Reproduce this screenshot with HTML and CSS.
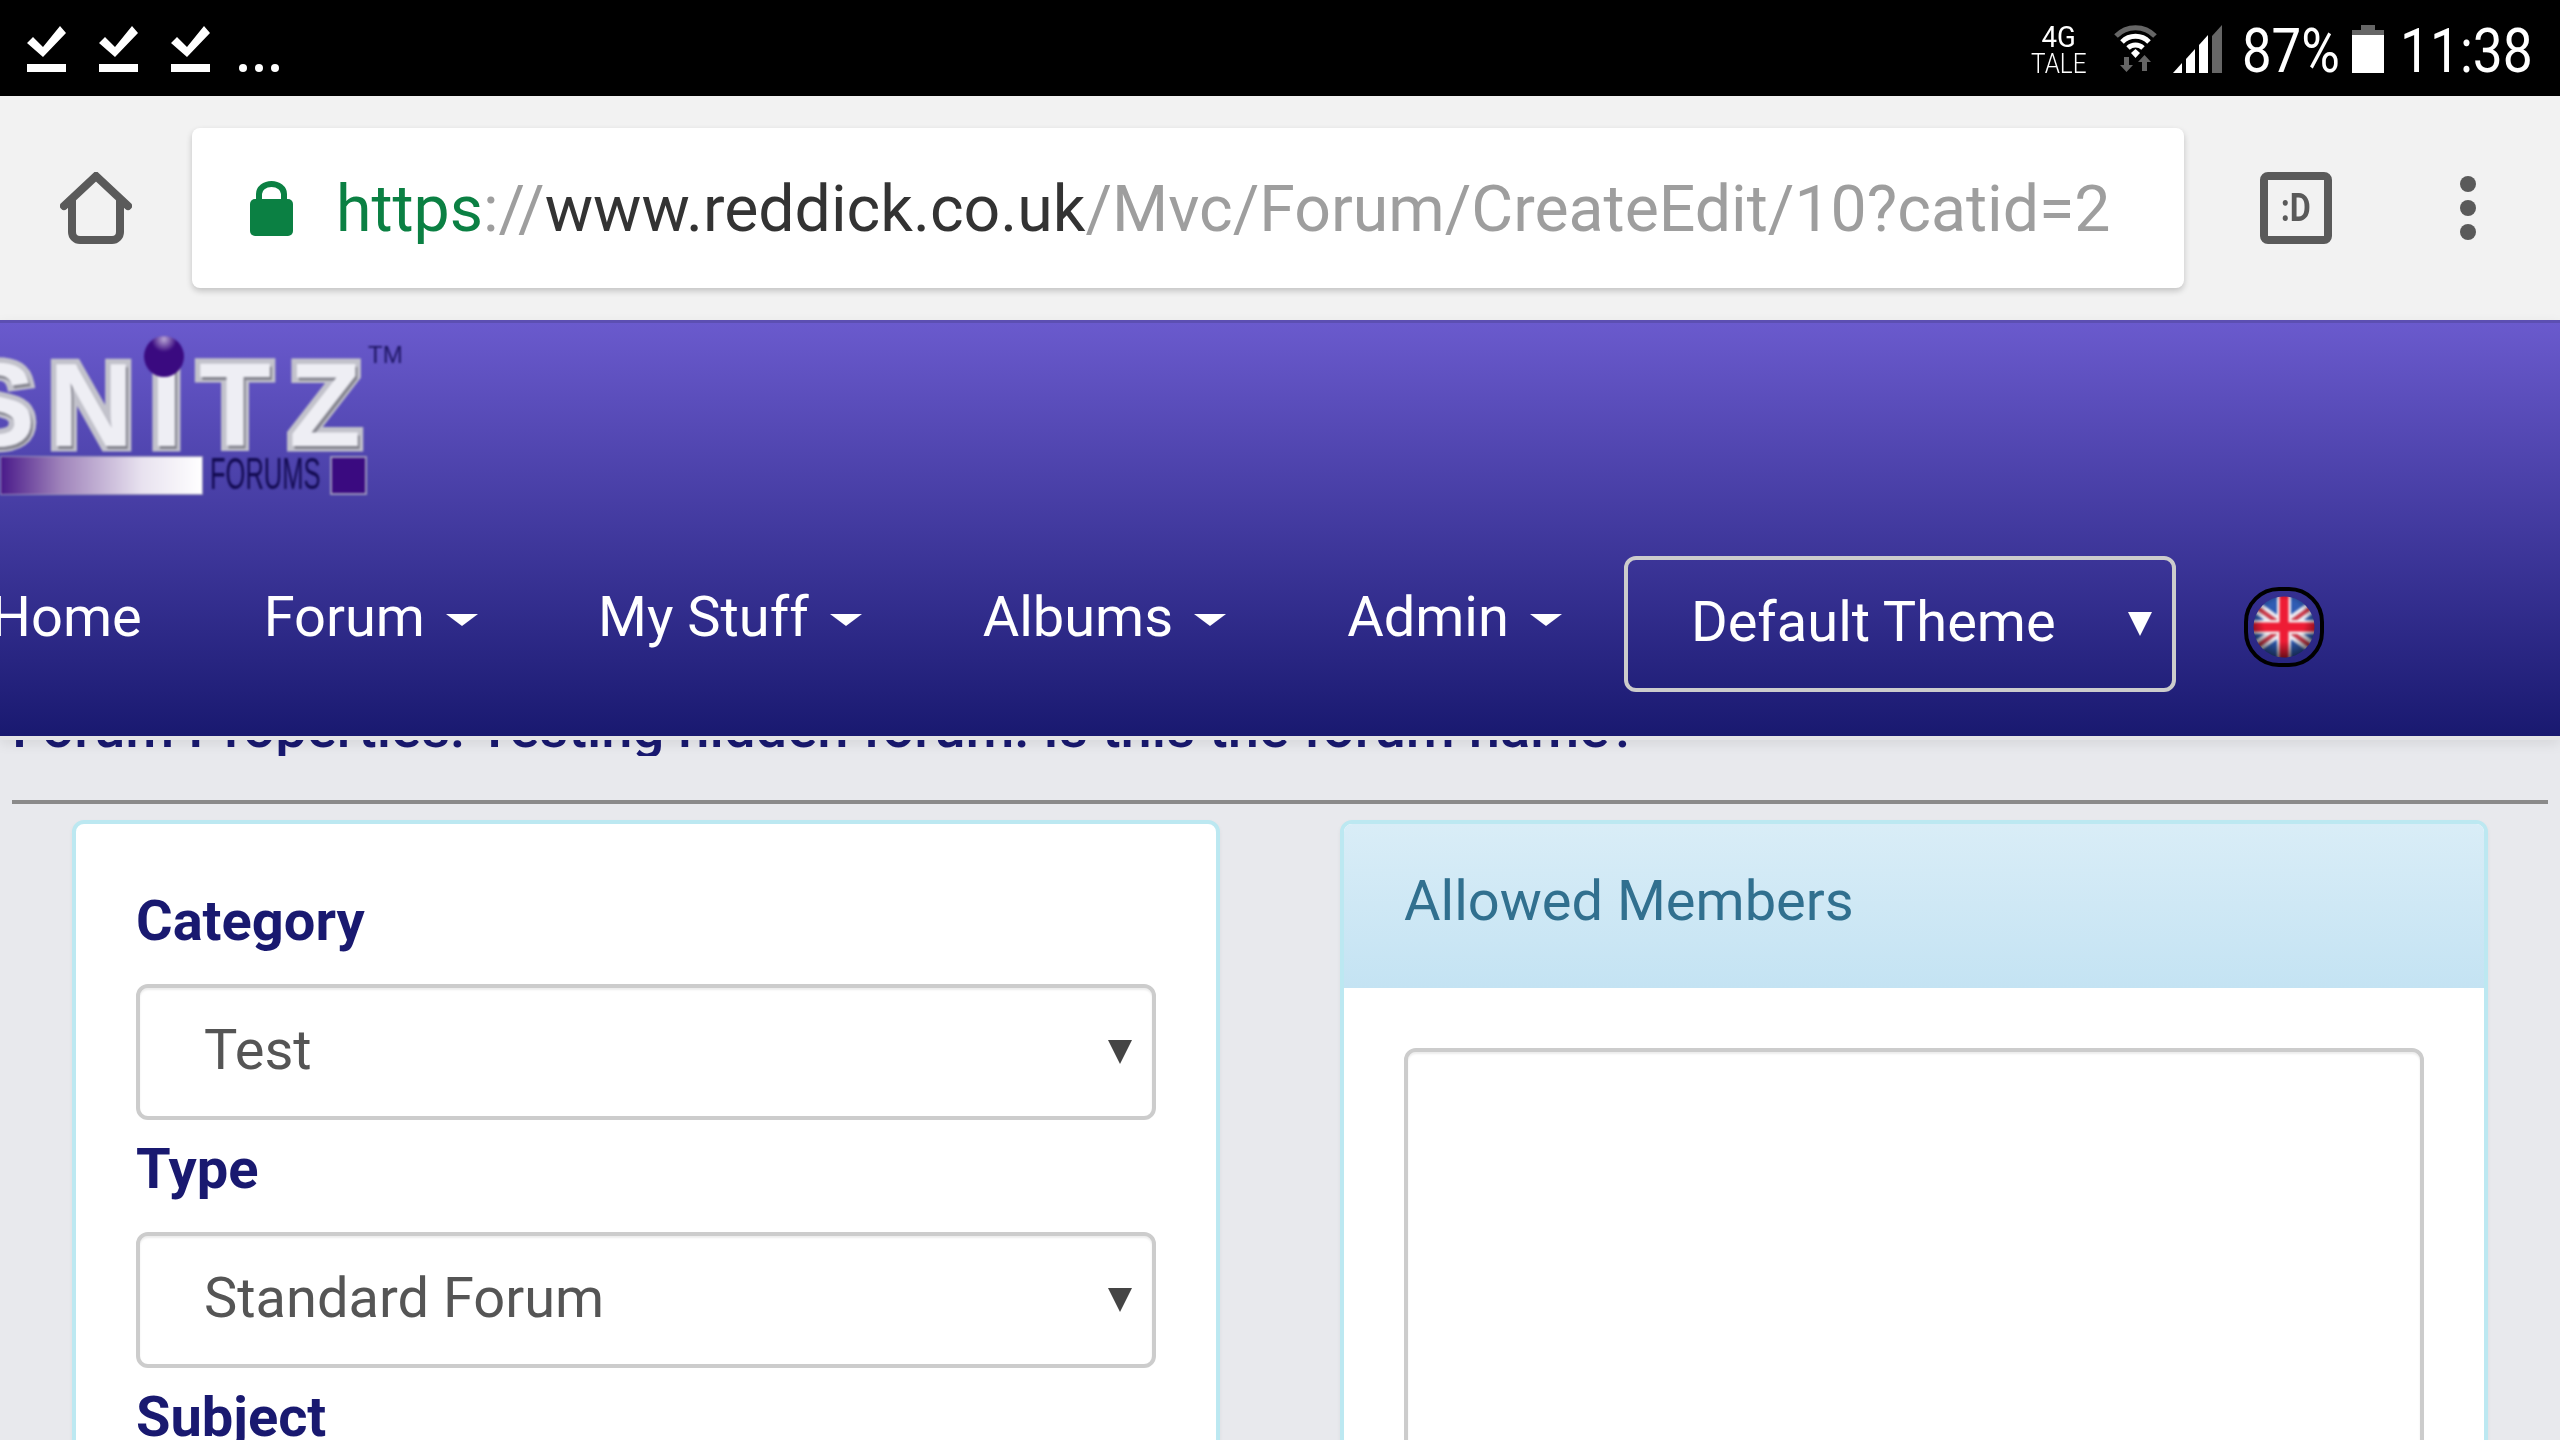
FILE: index.html
```html
<!DOCTYPE html>
<html lang="en">
<head>
  <meta charset="UTF-8">
  <title>Forum Properties</title>
  <link rel="stylesheet" href="styles.css">
</head>
<body>

  <div class="statusbar">
    <div class="status-left">
      <svg class="check" viewBox="0 0 39 46"><polygon points="0,17 6,11 16,21 33,0 39,7 16,31" fill="#fff"/><rect y="38" width="39" height="8" fill="#fff"/></svg>
      <svg class="check" viewBox="0 0 39 46"><polygon points="0,17 6,11 16,21 33,0 39,7 16,31" fill="#fff"/><rect y="38" width="39" height="8" fill="#fff"/></svg>
      <svg class="check" viewBox="0 0 39 46"><polygon points="0,17 6,11 16,21 33,0 39,7 16,31" fill="#fff"/><rect y="38" width="39" height="8" fill="#fff"/></svg>
      <div class="more-dots"><i></i><i></i><i></i></div>
    </div>
    <div class="status-right">
      <div class="net"><span class="net-4g">4G</span><span class="net-tale">TALE</span></div>
      <svg class="wifi" viewBox="0 0 43 48">
        <path d="M2 12 A27 27 0 0 1 41 12" fill="none" stroke="#666" stroke-width="5"/>
        <path d="M8 18 A19 19 0 0 1 35 18" fill="none" stroke="#fff" stroke-width="5"/>
        <path d="M14 24 A11 11 0 0 1 29 24" fill="none" stroke="#fff" stroke-width="5"/>
        <polygon points="17,29 21.500,25 26,29 21.500,34" fill="#fff"/>
        <polygon points="10,33 15,33 15,41 19,41 12.500,48 6,41 10,41" fill="#666"/>
        <polygon points="28,47 33,47 33,38 37,38 30.500,31 24,38 28,38" fill="#666"/>
      </svg>
      <svg class="signal" viewBox="0 0 49 48">
        <polygon points="0,48 9,48 9,38" fill="#fff"/>
        <polygon points="13,48 22,48 22,24 13,34" fill="#fff"/>
        <polygon points="26,48 35,48 35,10 26,20" fill="#fff"/>
        <polygon points="39,48 49,48 49,0 39,11" fill="#666"/>
      </svg>
      <span class="pct">87%</span>
      <div class="battery"><i class="batt-cap"></i><i class="batt-top"></i><i class="batt-fill"></i></div>
      <span class="clock">11:38</span>
    </div>
  </div>

  <div class="toolbar">
    <svg class="home-icon" viewBox="0 0 72 72">
      <path d="M4 34 L36 4 L68 34" fill="none" stroke="#5a5a5a" stroke-width="8" stroke-linecap="round" stroke-linejoin="miter"/>
      <path d="M12 28 V60 a8 8 0 0 0 8 8 H52 a8 8 0 0 0 8 -8 V28" fill="none" stroke="#5a5a5a" stroke-width="8"/>
    </svg>
    <div class="urlbar">
      <svg class="lock" viewBox="0 0 43 55">
        <path d="M9 20 V13 a12.500 10 0 0 1 25 0 V20" fill="none" stroke="#0b8043" stroke-width="6"/>
        <rect y="18" width="43" height="37" rx="5" fill="#0b8043"/>
      </svg>
      <div class="url"><span class="scheme">https</span><span class="faded">://</span><span class="host">www.reddick.co.uk</span><span class="faded">/Mvc/Forum/CreateEdit/10?catid=2</span></div>
    </div>
    <div class="tab-count"><span>:D</span></div>
    <div class="menu-dots"><i></i><i></i><i></i></div>
  </div>

  <div class="site-header">
    <div class="logo">
      <div class="logo-word">
        <span class="l-s">S</span><span class="l-n">N</span><span class="l-i">I</span><span class="l-t">T</span><span class="l-z">Z</span>
        <i class="logo-ball"></i>
        <span class="logo-tm">TM</span>
      </div>
      <div class="logo-sub">
        <i class="logo-bar"></i>
        <div class="logo-forums"><span>FORUMS</span></div>
        <i class="logo-square"></i>
      </div>
    </div>
    <div class="nav">
      <a class="nav-item nav-home">Home</a>
      <a class="nav-item nav-forum">Forum<i class="caret"></i></a>
      <a class="nav-item">My Stuff<i class="caret"></i></a>
      <a class="nav-item">Albums<i class="caret"></i></a>
      <a class="nav-item nav-last">Admin<i class="caret"></i></a>
      <div class="theme-select"><span>Default Theme</span><i class="sel-arrow"></i></div>
      <svg class="flag" viewBox="0 0 80 80">
        <defs>
          <clipPath id="flagclip"><circle cx="40" cy="40" r="30.500"/></clipPath>
          <radialGradient id="flagshade" cx="50%" cy="42%" r="52%">
            <stop offset="50%" stop-color="#000" stop-opacity="0"/>
            <stop offset="100%" stop-color="#000" stop-opacity=".7"/>
          </radialGradient>
        </defs>
        <rect x="2" y="2" width="76" height="76" rx="33" fill="none" stroke="#000" stroke-width="4"/>
        <g class="flag-art" clip-path="url(#flagclip)">
          <rect width="80" height="80" fill="#2f5cb4"/>
          <path d="M4 14 L76 66 M76 14 L4 66" stroke="#e8e8f0" stroke-width="12"/>
          <path d="M4 14 L76 66 M76 14 L4 66" stroke="#cc3a4a" stroke-width="4"/>
          <path d="M40 0 V80 M0 40 H80" stroke="#f4eef0" stroke-width="14"/>
          <path d="M40 0 V80 M0 40 H80" stroke="#ee1c35" stroke-width="9"/>
          <rect width="80" height="80" fill="url(#flagshade)"/>
        </g>
      </svg>
    </div>
  </div>

  <div class="page">
    <div class="title-row"><h1>Forum Properties: Testing hidden forum: Is this the forum name?</h1></div>
    <hr class="rule">
    <div class="columns">
      <div class="panel">
        <div class="panel-body form-body">
          <label>Category</label>
          <div class="select"><span>Test</span><i class="sel-arrow dark"></i></div>
          <label>Type</label>
          <div class="select"><span>Standard Forum</span><i class="sel-arrow dark"></i></div>
          <label>Subject</label>
        </div>
      </div>
      <div class="panel">
        <div class="panel-heading">Allowed Members</div>
        <div class="panel-body members-body">
          <div class="listbox"></div>
        </div>
      </div>
    </div>
  </div>

</body>
</html>
```

FILE: styles.css
```css
* {
  box-sizing: border-box;
}

html, body {
  margin: 0;
  height: 1440px;
  overflow: hidden;
  background-color: #e8e9ed;
  font-family: 'Roboto', sans-serif;
}

i {
  display: block;
}

/* Phone status bar */
.statusbar {
  height: 96px;
  background: #000;
  color: #fff;
  display: flex;
  justify-content: space-between;
}

.status-left {
  display: flex;
  align-items: flex-start;
  padding: 26px 0 0 27px;
  gap: 33px;
}

.check {
  width: 39px;
  height: 46px;
}

.more-dots {
  display: flex;
  gap: 8px;
  margin: 38px 0 0 -4px;
}

.more-dots i {
  width: 8px;
  height: 8px;
  border-radius: 50%;
  background: #fff;
}

.status-right {
  display: flex;
  align-items: flex-start;
  padding-top: 24px;
  padding-right: 29px;
}

.net {
  width: 52px;
  display: flex;
  flex-direction: column;
  align-items: center;
  margin-right: 29px;
}

.net-4g {
  font-size: 30px;
  line-height: 26px;
  transform: scaleX(.92);
}

.net-tale {
  font-size: 27px;
  font-weight: 300;
  line-height: 29px;
  transform: scaleX(.9);
}

.wifi {
  width: 43px;
  height: 48px;
  margin-right: 16px;
}

.signal {
  width: 49px;
  height: 48px;
  margin: 1px 23px 0 0;
}

.pct {
  width: 93px;
  font-size: 62px;
  line-height: 54px;
  white-space: nowrap;
  transform: scaleX(.85);
  transform-origin: left;
  margin-left: -3px;
  margin-right: 17px;
}

.battery {
  width: 32px;
  height: 48px;
  margin: 1px 19px 0 0;
  display: flex;
  flex-direction: column;
  align-items: center;
}

.batt-cap {
  width: 14px;
  height: 5px;
  background: #666;
}

.batt-top {
  width: 32px;
  height: 5px;
  background: #666;
}

.batt-fill {
  width: 32px;
  flex: 1;
  background: #fff;
}

.clock {
  width: 128px;
  font-size: 62px;
  line-height: 54px;
  white-space: nowrap;
  transform: scaleX(.86);
  transform-origin: left;
  margin-left: -3px;
  margin-right: 3px;
}

/* Browser toolbar */
.toolbar {
  height: 224px;
  background: #f2f2f2;
  display: flex;
  align-items: center;
}

.home-icon {
  width: 72px;
  height: 72px;
  margin: 0 60px;
}

.urlbar {
  width: 1992px;
  height: 160px;
  background: #fff;
  border-radius: 8px;
  box-shadow: 0 3px 6px rgba(0, 0, 0, 0.2);
  display: flex;
  align-items: center;
  padding-left: 58px;
}

.lock {
  width: 43px;
  height: 55px;
  margin-right: 43px;
}

.url {
  padding-top: 2px;
  font-size: 64.400px;
  white-space: nowrap;
  color: #9e9e9e;
}

.scheme {
  color: #0b8043;
}

.host {
  color: #333;
}

.tab-count {
  width: 72px;
  height: 72px;
  margin-left: 76px;
  border: 8px solid #5a5a5a;
  border-radius: 8px;
  display: flex;
  align-items: center;
  justify-content: center;
  color: #5a5a5a;
  font-size: 38px;
  font-weight: 700;
}

.tab-count span {
  transform: scaleX(.85);
}

.menu-dots {
  margin-left: 128px;
  display: flex;
  flex-direction: column;
  gap: 8px;
}

.menu-dots i {
  width: 16px;
  height: 16px;
  border-radius: 50%;
  background: #5a5a5a;
}

/* Site header */
.site-header {
  position: relative;
  z-index: 2;
  height: 420px;
  border-top: 3px solid #5c4fb2;
  border-bottom: 4px solid #e5e5e7;
  background: linear-gradient(#6a5acd 0, #191970 100%);
  box-shadow: 0 4px 12px rgba(0, 0, 0, 0.08);
  overflow: hidden;
}

.logo {
  height: 233px;
  padding-top: 34px;
  filter: blur(0.8px);
}

.logo-word {
  position: relative;
  display: flex;
  height: 96px;
  margin-left: -45px;
  font-family: 'Liberation Sans', sans-serif;
  font-weight: 700;
  font-size: 118px;
  line-height: 96px;
  color: #eeeef4;
  text-shadow: 2px 3px 0 #85858f;
  -webkit-text-stroke: 11px #c2c2cb;
  paint-order: stroke fill;
}

.logo-word span {
  display: block;
  text-align: center;
}

.l-s { width: 82px; margin-right: 8px; }
.l-n { width: 92px; margin-right: 13px; }
.l-i { width: 33px; margin-right: 10px; }
.l-t { width: 84px; margin-right: 6px; }
.l-z { width: 84px; }

.logo-ball {
  position: absolute;
  left: 189px;
  top: -21px;
  width: 40px;
  height: 41px;
  border-radius: 50%;
  background: radial-gradient(circle at 50% 8%, #b9a6d6 0, #3a0a80 30%);
}

.logo-word .logo-tm {
  position: absolute;
  left: 413px;
  top: -14px;
  font-size: 24px;
  line-height: 24px;
  font-weight: 400;
  color: #1c1460;
  text-shadow: none;
  -webkit-text-stroke: 0;
}

.logo-sub {
  display: flex;
  align-items: center;
  height: 39px;
  margin-top: 3px;
}

.logo-bar {
  width: 203px;
  height: 39px;
  border: 1px solid #9a94bc;
  background: linear-gradient(90deg, #4a1a8a 0, #a084bb 30%, #e8e2ef 70%, #fff 100%);
}

.logo-forums {
  width: 110px;
  margin-left: 7px;
  margin-bottom: 5px;
  font-family: 'Liberation Sans', sans-serif;
  font-size: 44px;
  line-height: 39px;
  color: #120a50;
}

.logo-forums span {
  display: block;
  white-space: nowrap;
  transform: scaleX(.58);
  transform-origin: left;
}

.logo-square {
  width: 37px;
  height: 39px;
  margin-left: 10px;
  border: 2px solid #9a94bc;
  background: #3a0a80;
}

.nav {
  display: flex;
  align-items: center;
  height: 136px;
  font-size: 56px;
  color: #fff;
}

.nav-item {
  display: flex;
  align-items: center;
  margin-bottom: 14px;
  margin-right: 121px;
  white-space: nowrap;
  transform-origin: left;
}

.nav-home {
  margin-left: -9px;
  margin-right: 122px;
}

.nav-forum {
  margin-right: 120px;
}

.nav-last {
  margin-right: 62px;
}

.caret {
  width: 0;
  height: 0;
  margin-left: 21px;
  margin-top: 6px;
  border-top: 12px solid #fff;
  border-left: 16px solid transparent;
  border-right: 16px solid transparent;
}

.theme-select {
  width: 552px;
  height: 136px;
  border: 4px solid #ccc;
  border-radius: 12px;
  display: flex;
  align-items: center;
  justify-content: space-between;
  padding: 0 20px 0 63px;
}

.theme-select span {
  margin-bottom: 5px;
  white-space: nowrap;
}

.sel-arrow {
  width: 0;
  height: 0;
  border-top: 24px solid #fff;
  border-left: 12px solid transparent;
  border-right: 12px solid transparent;
}

.sel-arrow.dark {
  border-top-color: #444;
}

.flag {
  width: 80px;
  height: 80px;
  margin: 6px 0 0 68px;
}

.flag-art {
  filter: blur(1px);
}

/* Page content */
.page {
  padding: 0 12px;
}

.title-row {
  height: 16px;
  overflow: hidden;
  display: flex;
  align-items: flex-end;
}

.title-row h1 {
  margin: 0;
  font-size: 56.200px;
  font-weight: 500;
  line-height: 56px;
  color: #191970;
  white-space: nowrap;
}

.rule {
  height: 4px;
  margin: 44px 0 16px;
  border: 0;
  background: #8a8a8a;
}

.columns {
  display: flex;
  gap: 120px;
  padding-left: 60px;
}

.panel {
  width: 1148px;
  height: 800px;
  border: 4px solid #bce8f1;
  border-radius: 12px;
  background: #fff;
  box-shadow: 0 2px 4px rgba(0, 0, 0, 0.05);
  overflow: hidden;
}

.panel-heading {
  height: 164px;
  padding-left: 60px;
  line-height: 154px;
  font-size: 56px;
  color: #31708f;
  background: linear-gradient(#d9edf7, #c4e3f3);
}

.form-body {
  padding: 64px 60px 0;
}

.form-body label {
  display: block;
  height: 64px;
  margin-bottom: 32px;
  font-size: 56px;
  font-weight: 700;
  line-height: 66px;
  color: #191970;
}

.select {
  height: 136px;
  margin-bottom: 16px;
  border: 4px solid #ccc;
  border-radius: 12px;
  display: flex;
  align-items: center;
  justify-content: space-between;
  padding: 0 20px 0 64px;
  font-size: 56px;
  color: #555;
  box-shadow: inset 0 2px 2px rgba(0, 0, 0, 0.075);
}

.select span {
  margin-bottom: 5px;
}

.members-body {
  padding: 60px 60px;
}

.listbox {
  height: 600px;
  border: 4px solid #ccc;
  border-radius: 12px;
  box-shadow: inset 0 2px 2px rgba(0, 0, 0, 0.075);
}
```
